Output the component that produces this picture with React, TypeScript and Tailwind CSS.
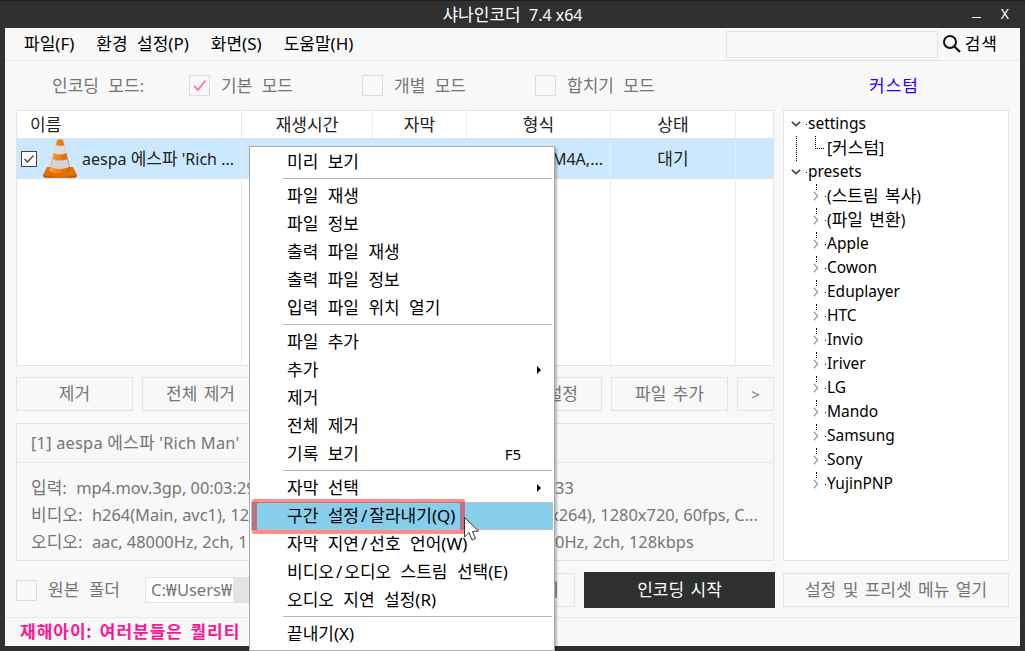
import { Fragment } from 'react'

const font = "[font-family:'Noto_Sans','Noto_Sans_CJK_KR',sans-serif]"

const columns = [
  { title: '이름', width: 'w-[225px]' },
  { title: '재생시간', width: 'w-[131px]' },
  { title: '자막', width: 'w-[94px]' },
  { title: '형식', width: 'w-[144px]' },
  { title: '상태', width: 'w-[125px]' },
]

const treeGroups = ['(스트림 복사)', '(파일 변환)', 'Apple', 'Cowon', 'Eduplayer', 'HTC', 'Invio', 'Iriver', 'LG', 'Mando', 'Samsung', 'Sony', 'YujinPNP']

const menuGroups = [
  [{ label: '미리 보기' }],
  [{ label: '파일 재생' }, { label: '파일 정보' }, { label: '출력 파일 재생' }, { label: '출력 파일 정보' }, { label: '입력 파일 위치 열기' }],
  [{ label: '파일 추가' }, { label: '추가', arrow: true }, { label: '제거' }, { label: '전체 제거' }, { label: '기록 보기', key: 'F5' }],
  [{ label: '자막 선택', arrow: true }, { label: '구간 설정/잘라내기(Q)', active: true }, { label: '자막 지연/선호 언어(W)' }, { label: '비디오/오디오 스트림 선택(E)' }, { label: '오디오 지연 설정(R)' }],
  [{ label: '끝내기(X)' }],
]

/* hangul runs are set a little larger with wider spaces, latin stays at the base size */
function T({ children, tight }: { children: string; tight?: boolean }) {
  const parts = children.split(/([가-힣]+(?:[ /][가-힣]+)*(?:: )?)/)
  return (
    <span>
      {parts.map((p, i) =>
        i % 2 === 1 ? (
          <span key={i} className={tight ? 'text-[17px] [word-spacing:2px]' : 'text-[17px] [word-spacing:5px]'}>
            {p.split('/').map((s, j) => (
              <Fragment key={j}>
                {j > 0 && <span className="mx-[2px]">/</span>}
                {s}
              </Fragment>
            ))}
          </span>
        ) : (
          <span key={i}>{p}</span>
        ),
      )}
    </span>
  )
}

function VlcCone() {
  return (
    <svg width="34" height="39" viewBox="0 0 34 39" className="shrink-0">
      <defs>
        <linearGradient id="cone" x1="0" x2="1" y1="0" y2="0">
          <stop offset="0" stopColor="#f9a640" />
          <stop offset="0.5" stopColor="#ef7d12" />
          <stop offset="1" stopColor="#d55c04" />
        </linearGradient>
      </defs>
      <path d="M0 36 L4 28 H30 L34 36 Q34 39 31 39 H3 Q0 39 0 36 Z" fill="#e07006" />
      <path d="M0 36 Q0 38 3 38 H31 Q34 38 34 36 Q17 40 0 36 Z" fill="#b9560a" />
      <path d="M14 1 Q17 -0.5 20 1 L28 32 Q17 37 6 32 Z" fill="url(#cone)" />
      <path d="M12.6 6 Q17 8 21.4 6 L23.6 14 Q17 17 10.4 14 Z" fill="#dcdcdc" />
      <path d="M9.8 20 Q17 23 24.2 20 L26.4 28 Q17 32 7.6 28 Z" fill="#d4d4d4" />
    </svg>
  )
}

function Chevron({ open }: { open?: boolean }) {
  return open ? (
    <svg width="10" height="6" viewBox="0 0 10 6" className="shrink-0">
      <path d="M0.8 0.8 L5 4.6 L9.2 0.8" fill="none" stroke="#444" strokeWidth="1.6" />
    </svg>
  ) : (
    <svg width="6" height="10" viewBox="0 0 6 10" className="shrink-0">
      <path d="M0.8 0.8 L4.6 5 L0.8 9.2" fill="none" stroke="#a8a8a8" strokeWidth="1.6" />
    </svg>
  )
}

function Btn({ label, className }: { label: string; className: string }) {
  return (
    <div className={`flex h-[34px] items-center justify-center border border-[#e3e3e3] bg-[#f8f8f8] text-[15px] text-[#757575] ${className}`}>
      <T tight>{label}</T>
    </div>
  )
}

function TreeRoot({ label }: { label: string }) {
  return (
    <div className="flex h-[24px] items-center pl-[7px]">
      <Chevron open />
      <span className="ml-[5px] h-[1px] w-[1px] bg-black" />
      <span className="ml-[1px] text-[15.5px] leading-none text-black">{label}</span>
    </div>
  )
}

function TreeItem({ label }: { label: string }) {
  return (
    <div className="relative flex h-[24px] items-center pl-[29px]">
      <span className="absolute top-0 left-[32px] h-[6px] border-l border-dotted border-black" />
      <Chevron />
      <span className="ml-[6px] h-[1px] w-[1px] bg-black" />
      <span className="ml-[1px] whitespace-nowrap text-[15.5px] leading-none text-black">
        <T tight>{label}</T>
      </span>
    </div>
  )
}

function ContextMenu() {
  return (
    <div className={`absolute top-[145px] left-[249px] w-[306px] border border-[#a9a9a9] bg-white pt-[1px] pr-[1px] pb-[2px] pl-[1px] shadow-[2px_2px_2px_rgba(0,0,0,0.25)] ${font}`}>
      {menuGroups.map((group, g) => (
        <div key={g}>
          {g > 0 && <div className="mt-[2px] mr-[1px] mb-[3px] ml-[32px] h-[1px] bg-[#b5b5b5]" />}
          {group.map((item) => (
            <div
              key={item.label}
              className={`flex h-[28px] items-center pr-[12px] text-[17px] text-black ${item.active ? 'border border-[#b4c4cc] bg-[#87ceeb] pl-[35px]' : 'pl-[36px]'}`}
            >
              <span className="flex-1 whitespace-nowrap">
                <T>{item.label}</T>
              </span>
              {item.key && <span className="mr-[20px] text-[15px]">{item.key}</span>}
              {item.arrow && <span className="h-0 w-0 border-y-[4px] border-l-[4px] border-y-transparent border-l-black" />}
            </div>
          ))}
        </div>
      ))}
    </div>
  )
}

export default function App() {
  return (
    <div className={`relative flex h-[651px] w-[1025px] flex-col overflow-hidden border-t border-[#1f1f1f] bg-[#303030] ${font}`}>
      <div className="relative flex h-[27px] shrink-0 items-center justify-center text-[16px] text-white">
        <T>샤나인코더</T>&nbsp;&nbsp;7.4 x64
        <div className="absolute top-[2px] right-[16px] flex items-center gap-[20px] text-[14px]">
          <span className="mt-[8px] h-[1px] w-[9px] bg-white" />
          <span>X</span>
        </div>
      </div>

      <div className="mx-[5px] mb-[5px] flex flex-1 flex-col bg-[#f8f8f8]">
        <div className="flex h-[33px] shrink-0 items-center border-b border-[#e4e4e4] pr-[22px] pl-[19px]">
          <div className="flex flex-1 gap-[22px] text-[17px] text-black">
            <T>파일(F)</T>
            <T>환경 설정(P)</T>
            <T>화면(S)</T>
            <T>도움말(H)</T>
          </div>
          <div className="h-[27px] w-[212px] border border-[#e3e3e3] bg-[#f8f8f8]" />
          <svg width="20" height="20" viewBox="0 0 20 20" className="mr-[3px] ml-[4px]">
            <circle cx="8" cy="8" r="6" fill="none" stroke="#111" strokeWidth="2" />
            <path d="M12.5 12.5 L18 18" stroke="#111" strokeWidth="2.2" />
          </svg>
          <span className="text-[16px] tracking-[1px] text-black"><T>검색</T></span>
        </div>

        <div className="flex h-[49px] shrink-0 items-center pr-[101px] pl-[47px] text-[16px] text-[#757575]">
          <span className="w-[137px]"><T>인코딩 모드:</T></span>
          <div className="flex w-[173px] items-center gap-[11px]">
            <span className="flex h-[21px] w-[21px] items-center justify-center border border-[#dcdcdc]">
              <svg width="15" height="13" viewBox="0 0 15 13">
                <path d="M2 7 L6 11 L13.5 1.5" fill="none" stroke="#ff6fa8" strokeWidth="1.8" />
              </svg>
            </span>
            <T>기본 모드</T>
          </div>
          <div className="flex w-[173px] items-center gap-[11px]">
            <span className="h-[21px] w-[21px] border border-[#dcdcdc]" />
            <T>개별 모드</T>
          </div>
          <div className="flex flex-1 items-center gap-[11px]">
            <span className="h-[21px] w-[21px] border border-[#dcdcdc]" />
            <T>합치기 모드</T>
          </div>
          <span className="tracking-[1px] text-[#2200ff]"><T>커스텀</T></span>
        </div>

        <div className="flex shrink-0 gap-[9px] px-[11px]">
          <div className="flex w-[758px] flex-col">
            <div className="flex h-[256px] border border-[#e3e3e3] bg-white">
              {columns.map((c, i) => (
                <div key={c.title} className={`flex ${c.width} flex-col border-r border-[#ebebeb]`}>
                  <div className={`flex h-[27px] items-center text-[#222] ${i === 0 ? 'pl-[13px]' : 'justify-center'}`}>
                    <T>{c.title}</T>
                  </div>
                  <div className={`flex h-[41px] items-center overflow-hidden bg-[#cce8ff] text-[16px] text-[#222] ${i === 0 ? 'pl-[4px]' : i === 3 ? 'justify-end pr-[7px]' : 'justify-center'}`}>
                    {i === 0 && (
                      <>
                        <span className="flex h-[16px] w-[16px] shrink-0 items-center justify-center border border-[#444] bg-white">
                          <svg width="12" height="10" viewBox="0 0 12 10">
                            <path d="M1.5 5 L4.5 8 L10.5 1.5" fill="none" stroke="#444" strokeWidth="1.3" />
                          </svg>
                        </span>
                        <span className="ml-[6px]"><VlcCone /></span>
                        <span className="ml-[5px] whitespace-nowrap"><T>aespa 에스파 'Rich ...</T></span>
                      </>
                    )}
                    {i === 3 && <span className="whitespace-nowrap">M4A,...</span>}
                    {i === 4 && <T>대기</T>}
                  </div>
                </div>
              ))}
              <div className="flex flex-1 flex-col">
                <div className="h-[27px]" />
                <div className="h-[41px] bg-[#cce8ff]" />
              </div>
            </div>

            <div className="mt-[11px] flex gap-[9px]">
              <Btn label="제거" className="w-[117px]" />
              <Btn label="전체 제거" className="w-[117px]" />
              <Btn label="" className="w-[208px]" />
              <Btn label="구간 설정" className="w-[117px]" />
              <Btn label="파일 추가" className="w-[117px]" />
              <Btn label=">" className="w-[37px]" />
            </div>

            <div className="mt-[12px] flex h-[138px] flex-col border border-[#e3e3e3] text-[16.4px] text-[#757575]">
              <div className="flex h-[39px] items-center border-b border-[#e8e8e8] pl-[14px] tracking-[0.2px]">
                <T>[1] aespa 에스파 'Rich Man'</T>
              </div>
              <div className="flex flex-1 pt-[11px] pl-[14px] leading-[27px]">
                <div className="w-[524px] whitespace-nowrap">
                  <div><T>입력: mp4.mov.3gp, 00:03:29</T></div>
                  <div><T>비디오: h264(Main, avc1), 12</T></div>
                  <div><T>오디오: aac, 48000Hz, 2ch, 1</T></div>
                </div>
                <div className="whitespace-nowrap">
                  <div>33</div>
                  <div className="-ml-[5px]">x264), 1280x720, 60fps, C...</div>
                  <div>0Hz, 2ch, 128kbps</div>
                </div>
              </div>
            </div>
          </div>

          <div className="flex h-[451px] flex-1 flex-col border border-[#e3e3e3] bg-white pt-[1px]">
            <TreeRoot label="settings" />
            <div className="relative flex h-[24px] items-center pl-[43px] text-[15.5px] leading-none text-black">
              <span className="absolute top-0 left-[12px] h-[25px] border-l border-dotted border-black" />
              <span className="absolute top-0 left-[31px] h-[13px] w-[9px] border-b border-l border-dotted border-black" />
              <T tight>[커스텀]</T>
            </div>
            <TreeRoot label="presets" />
            {treeGroups.map((t) => (
              <TreeItem key={t} label={t} />
            ))}
          </div>
        </div>

        <div className="flex h-[57px] shrink-0 items-center border-b border-[#e8e8e8] px-[11px] pt-[2px]">
          <span className="h-[21px] w-[21px] border border-[#dcdcdc]" />
          <span className="ml-[11px] w-[97px] text-[16px] text-[#757575]"><T>원본 폴더</T></span>
          <div className="flex h-[26px] w-[330px] items-center border border-[#e3e3e3] bg-white pl-[5px] text-[16.5px] text-[#757575]">
            C:₩Users₩
            <span className="ml-[1px] h-full w-[18px] bg-[#e2e3e5]" />
          </div>
          <Btn label="기" className="ml-[6px] w-[94px] pl-[46px]" />
          <div className="ml-[9px] flex h-[36px] w-[191px] items-center justify-center bg-[#2f2f2f] text-[15px] text-white">
            <T tight>인코딩 시작</T>
          </div>
          <Btn label="설정 및 프리셋 메뉴 열기" className="ml-[8px] w-[226px]" />
        </div>

        <div className="flex flex-1 items-center pl-[15px] text-[16px] font-bold tracking-[1px] text-[#ff1493]">
          <T tight>재해아이: 여러분들은 퀄리티</T>
        </div>
      </div>

      <ContextMenu />

      <div className="absolute top-[498px] left-[252px] h-[35px] w-[213px] rounded-[2px] border-x-[5px] border-y-[4px] border-[#ff0000]/45" />
      <svg width="18" height="26" viewBox="0 0 18 26" className="absolute top-[516px] left-[464px]">
        <path d="M0.5 0.5 V20 L5 15.5 L8 23 L11.5 21.5 L8.5 14.5 L14.5 14 Z" fill="#fff" stroke="#333" strokeWidth="1" />
      </svg>
    </div>
  )
}
